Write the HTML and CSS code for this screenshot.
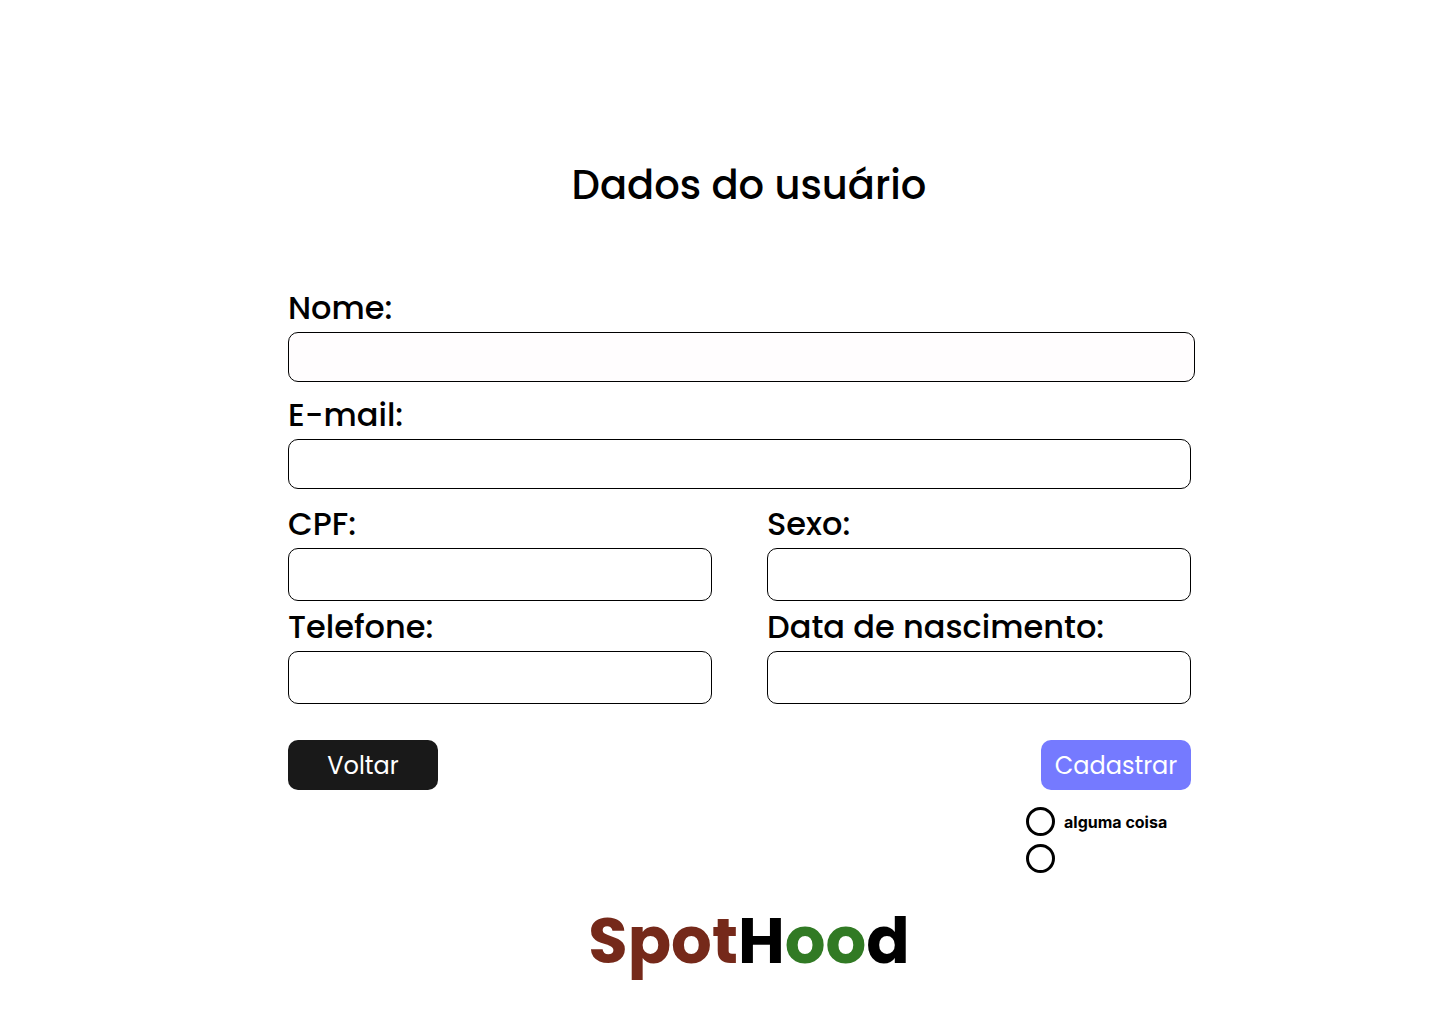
FILE: index.html
```html
<!DOCTYPE html>
<html lang="pt-BR">
<head>
<meta charset="utf-8">
<meta name="viewport" content="width=device-width, initial-scale=1">
<title>SpotHood</title>
<link rel="stylesheet" href="styles.css">
</head>
<body>
<header class="heading">
  <h1 class="title">Dados do usuário</h1>
</header>
<main class="content">
  <form class="form">
    <div class="field">
      <label class="label" for="nome">Nome:</label>
      <input class="input input-tinted" id="nome" type="text">
    </div>
    <div class="details">
      <div class="field">
        <label class="label" for="email">E-mail:</label>
        <input class="input" id="email" type="email">
      </div>
      <div class="columns">
        <div class="field">
          <label class="label" for="cpf">CPF:</label>
          <input class="input input-tall" id="cpf" type="text">
        </div>
        <div class="field">
          <label class="label" for="sexo">Sexo:</label>
          <input class="input input-tall" id="sexo" type="text">
        </div>
        <div class="field">
          <label class="label" for="telefone">Telefone:</label>
          <input class="input input-tall" id="telefone" type="tel">
        </div>
        <div class="field">
          <label class="label" for="nascimento">Data de nascimento:</label>
          <input class="input input-tall" id="nascimento" type="text">
        </div>
      </div>
      <div class="actions">
        <button class="button button-dark" type="button">Voltar</button>
        <button class="button button-primary" type="submit">Cadastrar</button>
      </div>
      <div class="options">
        <label class="option"><input class="radio" type="radio" name="opcao">alguma coisa</label>
        <label class="option"><input class="radio" type="radio" name="opcao" aria-label="Outra opção"></label>
      </div>
    </div>
  </form>
</main>
<footer class="heading">
  <p class="logo"><span class="logo-red">Spot</span>H<span class="logo-green">oo</span>d</p>
</footer>
</body>
</html>
```
FILE: styles.css
```css
* {
  box-sizing: border-box;
}

body {
  margin: 0;
  padding-top: 155px;
  background: #fff;
  color: #000;
  font-family: Poppins, Inter, sans-serif;
}

.heading {
  padding: 0 230px 0 288px;
  text-align: center;
}

.title {
  margin: 0;
  font-size: 40px;
  font-weight: 500;
  line-height: 60px;
}

.content {
  padding: 69px 245px 0 288px;
}

.form {
  display: flex;
  flex-direction: column;
  gap: 9px;
}

.details {
  display: flex;
  flex-direction: column;
  gap: 11px;
  padding-right: 4px;
}

.field {
  display: flex;
  flex-direction: column;
}

.label {
  font-size: 32px;
  font-weight: 500;
  line-height: 48px;
  white-space: nowrap;
}

.input {
  width: 100%;
  height: 50px;
  padding: 0 16px;
  border: 1px solid #000;
  border-radius: 10px;
  background: #fff;
  font: inherit;
  font-size: 24px;
}

.input-tinted {
  background: #fffdfe;
}

.input-tall {
  height: 53px;
}

.columns {
  display: grid;
  grid-template-columns: 1fr 1fr;
  gap: 2px 55px;
}

.actions {
  display: flex;
  justify-content: space-between;
  padding-top: 25px;
}

.button {
  width: 150px;
  height: 50px;
  padding: 0;
  border: 0;
  border-radius: 10px;
  color: #fff;
  font: inherit;
  font-size: 24px;
}

.button-dark {
  background: #191919;
}

.button-primary {
  background: #757aff;
}

.options {
  display: flex;
  flex-direction: column;
  gap: 8px;
  align-self: flex-end;
  width: 165px;
  padding-top: 6px;
}

.option {
  display: flex;
  align-items: center;
  gap: 9px;
  font-family: Inter, sans-serif;
  font-size: 16px;
  font-weight: 700;
  white-space: nowrap;
}

.radio {
  appearance: none;
  flex: none;
  width: 29px;
  height: 29px;
  margin: 0;
  border: 3px solid #000;
  border-radius: 50%;
}

.radio:checked {
  background: radial-gradient(#000 40%, transparent 45%);
}

.logo {
  margin: 20px 0 0;
  font-size: 64px;
  font-weight: 700;
  line-height: 96px;
}

.logo-red {
  color: #75291a;
}

.logo-green {
  color: #317a24;
}
```
